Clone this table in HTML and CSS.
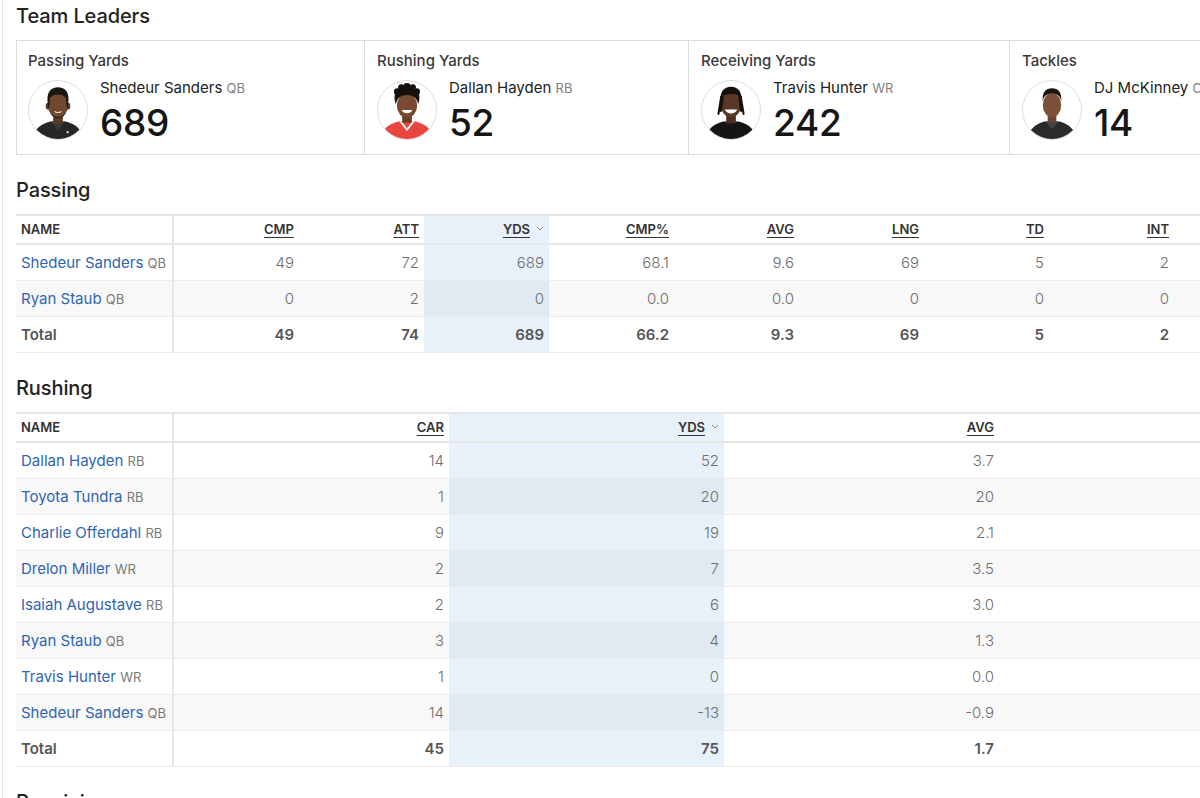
FILE: index.html
```html
<!DOCTYPE html>
<html lang="en">
<head>
<meta charset="utf-8">
<title>Team Stats</title>
<link rel="stylesheet" href="styles.css">
</head>
<body>
<div class="page">
  <h2 class="section-title first">Team Leaders</h2>
  <div class="leaders">
    <div class="leader">
      <div class="leader-label">Passing Yards</div>
      <div class="leader-body">
        <div class="avatar">
          <svg viewBox="0 0 60 60" width="60" height="60">
            <path d="M3 60 C5 50 13 44 22 42 L38 42 C47 44 55 50 57 60 Z" fill="#262626"/>
            <path d="M23 42 L30 51 L37 42 Z" fill="#3a3a3a"/>
            <rect x="25" y="33" width="10" height="11" fill="#5b3a28"/>
            <ellipse cx="19.5" cy="26" rx="2.2" ry="3.5" fill="#5e3c29"/>
            <ellipse cx="40.5" cy="26" rx="2.2" ry="3.5" fill="#5e3c29"/>
            <ellipse cx="30" cy="25" rx="10.5" ry="13" fill="#70472f"/>
            <path d="M19.5 24 C17.5 11 23 6.5 30 6.5 C37 6.5 42.5 11 40.5 24 C39.5 17 36 14 30 14 C24 14 20.5 17 19.5 24 Z" fill="#1a1612"/>
            <path d="M21 19 L20 27 M39 19 L40 27" stroke="#1a1612" stroke-width="1.6" stroke-linecap="round"/>
            <path d="M22 32 C25 38.5 35 38.5 38 32 C37 36 34 38.5 30 38.5 C26 38.5 23 36 22 32 Z" fill="#3a2519"/>
            <path d="M26.5 31.5 C28 33 32 33 33.5 31.5" stroke="#f2e8e0" stroke-width="1.2" fill="none"/>
            <circle cx="40" cy="53" r="1.2" fill="#ddd"/>
          </svg>
        </div>
        <div class="leader-info">
          <div class="leader-name">Shedeur Sanders <span class="pos">QB</span></div>
          <div class="leader-value">689</div>
        </div>
      </div>
    </div>
    <div class="leader">
      <div class="leader-label">Rushing Yards</div>
      <div class="leader-body">
        <div class="avatar">
          <svg viewBox="0 0 60 60" width="60" height="60">
            <path d="M2 60 C4 50 12 44 21 42 L39 42 C48 44 56 50 58 60 Z" fill="#e8463f"/>
            <path d="M22 42 L30 52 L38 42 Z" fill="#f3f3f3"/>
            <path d="M24.5 42 L30 49 L35.5 42 Z" fill="#e8463f"/>
            <rect x="25" y="33" width="10" height="10" fill="#6a3f2a"/>
            <ellipse cx="30" cy="25.5" rx="10.5" ry="12.5" fill="#7a4a30"/>
            <path d="M18.5 24 C15.5 17 17.5 9 23 7 C25.5 3.5 34.5 3.5 37 7 C42.5 9 44.5 17 41.5 24 C40.5 18 36.5 14.5 30 14.5 C23.5 14.5 19.5 18 18.5 24 Z" fill="#17110d"/>
            <circle cx="20" cy="11" r="3.5" fill="#17110d"/>
            <circle cx="40" cy="11" r="3.5" fill="#17110d"/>
            <circle cx="30" cy="6" r="4" fill="#17110d"/>
            <circle cx="24" cy="6.5" r="3.2" fill="#17110d"/>
            <circle cx="36" cy="6.5" r="3.2" fill="#17110d"/>
            <path d="M24.5 30 C26.5 34.5 33.5 34.5 35.5 30 Z" fill="#fff"/>
          </svg>
        </div>
        <div class="leader-info">
          <div class="leader-name">Dallan Hayden <span class="pos">RB</span></div>
          <div class="leader-value">52</div>
        </div>
      </div>
    </div>
    <div class="leader">
      <div class="leader-label">Receiving Yards</div>
      <div class="leader-body">
        <div class="avatar">
          <svg viewBox="0 0 60 60" width="60" height="60">
            <path d="M3 60 C5 50 13 44 22 42 L38 42 C47 44 55 50 57 60 Z" fill="#141414"/>
            <rect x="25" y="33" width="10" height="11" fill="#4a2e1f"/>
            <ellipse cx="30" cy="25" rx="10.5" ry="12.5" fill="#5a3825"/>
            <path d="M19.5 23 C17.5 11 23 6 30 6 C37 6 42.5 11 40.5 23 C39.5 16 36 13.5 30 13.5 C24 13.5 20.5 16 19.5 23 Z" fill="#16110d"/>
            <path d="M20 16 L17 34 M22 13 L19.5 31 M40 16 L43 34 M38 13 L40.5 31" stroke="#16110d" stroke-width="2.2" stroke-linecap="round"/>
            <path d="M23.5 29.5 C26 35 34 35 36.5 29.5 Z" fill="#fff"/>
          </svg>
        </div>
        <div class="leader-info">
          <div class="leader-name">Travis Hunter <span class="pos">WR</span></div>
          <div class="leader-value">242</div>
        </div>
      </div>
    </div>
    <div class="leader">
      <div class="leader-label">Tackles</div>
      <div class="leader-body">
        <div class="avatar">
          <svg viewBox="0 0 60 60" width="60" height="60">
            <path d="M4 60 C6 50 14 44 22 42 L38 42 C46 44 54 50 56 60 Z" fill="#2a2a2a"/>
            <path d="M23 42 L30 50 L37 42 Z" fill="#444"/>
            <rect x="25.5" y="33" width="9" height="10" fill="#6b4532"/>
            <ellipse cx="30" cy="25" rx="9.5" ry="12.5" fill="#7d5139"/>
            <path d="M20.5 21 C19.5 11 24 7.5 30 7.5 C36 7.5 40.5 11 39.5 21 C38.5 15 35 13 30 13 C25 13 21.5 15 20.5 21 Z" fill="#1c1510"/>
          </svg>
        </div>
        <div class="leader-info">
          <div class="leader-name">DJ McKinney <span class="pos">CB</span></div>
          <div class="leader-value">14</div>
        </div>
      </div>
    </div>
  </div>

  <h2 class="section-title">Passing</h2>
  <table class="stats passing">
    <colgroup>
      <col class="col-name">
      <col span="11" class="col-pass">
    </colgroup>
    <thead>
      <tr>
        <th class="name">NAME</th>
        <th><span class="sort">CMP</span></th>
        <th><span class="sort">ATT</span></th>
        <th class="sorted"><span class="sort">YDS</span><svg class="chev" viewBox="0 0 8 5" width="8" height="5"><path d="M1 1 L4 4 L7 1" fill="none" stroke="#888" stroke-width="1"/></svg></th>
        <th><span class="sort">CMP%</span></th>
        <th><span class="sort">AVG</span></th>
        <th><span class="sort">LNG</span></th>
        <th><span class="sort">TD</span></th>
        <th><span class="sort">INT</span></th>
        <th><span class="sort">SACK</span></th>
        <th><span class="sort">QBR</span></th>
        <th><span class="sort">RTG</span></th>
      </tr>
    </thead>
    <tbody>
      <tr>
        <td class="name"><a href="#">Shedeur Sanders</a> <span class="pos">QB</span></td>
        <td>49</td><td>72</td><td class="sorted">689</td><td>68.1</td><td>9.6</td><td>69</td><td>5</td><td>2</td><td>4</td><td>72.4</td><td>160.2</td>
      </tr>
      <tr>
        <td class="name"><a href="#">Ryan Staub</a> <span class="pos">QB</span></td>
        <td>0</td><td>2</td><td class="sorted">0</td><td>0.0</td><td>0.0</td><td>0</td><td>0</td><td>0</td><td>0</td><td>0.0</td><td>0.0</td>
      </tr>
      <tr class="total">
        <td class="name">Total</td>
        <td>49</td><td>74</td><td class="sorted">689</td><td>66.2</td><td>9.3</td><td>69</td><td>5</td><td>2</td><td>4</td><td></td><td></td>
      </tr>
    </tbody>
  </table>

  <h2 class="section-title">Rushing</h2>
  <table class="stats rushing">
    <colgroup>
      <col class="col-name">
      <col span="5" class="col-rush">
    </colgroup>
    <thead>
      <tr>
        <th class="name">NAME</th>
        <th><span class="sort">CAR</span></th>
        <th class="sorted"><span class="sort">YDS</span><svg class="chev" viewBox="0 0 8 5" width="8" height="5"><path d="M1 1 L4 4 L7 1" fill="none" stroke="#888" stroke-width="1"/></svg></th>
        <th><span class="sort">AVG</span></th>
        <th><span class="sort">LNG</span></th>
        <th><span class="sort">TD</span></th>
      </tr>
    </thead>
    <tbody>
      <tr><td class="name"><a href="#">Dallan Hayden</a> <span class="pos">RB</span></td><td>14</td><td class="sorted">52</td><td>3.7</td><td>12</td><td>0</td></tr>
      <tr><td class="name"><a href="#">Toyota Tundra</a> <span class="pos">RB</span></td><td>1</td><td class="sorted">20</td><td>20</td><td>20</td><td>0</td></tr>
      <tr><td class="name"><a href="#">Charlie Offerdahl</a> <span class="pos">RB</span></td><td>9</td><td class="sorted">19</td><td>2.1</td><td>6</td><td>0</td></tr>
      <tr><td class="name"><a href="#">Drelon Miller</a> <span class="pos">WR</span></td><td>2</td><td class="sorted">7</td><td>3.5</td><td>5</td><td>0</td></tr>
      <tr><td class="name"><a href="#">Isaiah Augustave</a> <span class="pos">RB</span></td><td>2</td><td class="sorted">6</td><td>3.0</td><td>4</td><td>0</td></tr>
      <tr><td class="name"><a href="#">Ryan Staub</a> <span class="pos">QB</span></td><td>3</td><td class="sorted">4</td><td>1.3</td><td>3</td><td>0</td></tr>
      <tr><td class="name"><a href="#">Travis Hunter</a> <span class="pos">WR</span></td><td>1</td><td class="sorted">0</td><td>0.0</td><td>0</td><td>0</td></tr>
      <tr><td class="name"><a href="#">Shedeur Sanders</a> <span class="pos">QB</span></td><td>14</td><td class="sorted">-13</td><td>-0.9</td><td>9</td><td>0</td></tr>
      <tr class="total"><td class="name">Total</td><td>45</td><td class="sorted">75</td><td>1.7</td><td>20</td><td>0</td></tr>
    </tbody>
  </table>

  <h2 class="section-title">Receiving</h2>
</div>
</body>
</html>
```

FILE: styles.css
```css
html, body {
  margin: 0;
  padding: 0;
  background: #ffffff;
  overflow: hidden;
}

body {
  font-family: "Inter", "Liberation Sans", sans-serif;
  color: #222222;
}

.page {
  margin-left: 2px;
  border-left: 1px solid #e6e6e6;
  padding: 4px 0 0 13px;
  min-height: 900px;
  width: 1700px;
}

.section-title {
  margin: 23px 0 12px;
  font-size: 20px;
  line-height: 24px;
  font-weight: 500;
  color: #222222;
  letter-spacing: -0.1px;
}

.section-title.first {
  margin-top: 0;
}

/* Leaders */
.leaders {
  display: grid;
  grid-template-columns: 347px 324px 321px 360px;
  width: max-content;
  border: 1px solid #dcdcdc;
}

.leader {
  padding: 11px 12px 13px;
  border-left: 1px solid #dcdcdc;
}

.leader:first-child {
  border-left: none;
  padding-left: 11px;
}

.leader-label {
  font-size: 15px;
  line-height: 18px;
  font-weight: 500;
  color: #3a3a3a;
}

.leader-body {
  display: flex;
  gap: 12px;
  margin-top: 10px;
  align-items: flex-start;
}

.avatar {
  width: 58px;
  height: 58px;
  border-radius: 50%;
  border: 1px solid #dedede;
  overflow: hidden;
  background: #ffffff;
  flex: none;
}

.avatar svg {
  display: block;
  width: 58px;
  height: 58px;
}

.leader-info {
  display: flex;
  flex-direction: column;
}

.leader-name {
  font-size: 15px;
  line-height: 16px;
  color: #222222;
  white-space: nowrap;
}

.leader-name .pos {
  font-size: 13px;
  line-height: 1;
  color: #808080;
}

.leader-value {
  margin-top: 8px;
  font-size: 37px;
  line-height: 37px;
  font-weight: 500;
  color: #151515;
  letter-spacing: -0.3px;
}

/* Tables */
.stats {
  border-collapse: separate;
  border-spacing: 0;
  table-layout: fixed;
  width: 1533px;
}

.col-name {
  width: 158px;
}

.col-pass {
  width: 125px;
}

.col-rush {
  width: 275px;
}

.stats th,
.stats td {
  padding: 0 5px;
  text-align: right;
  white-space: nowrap;
  overflow: hidden;
}

.stats th {
  height: 27px;
  line-height: 27px;
  border-top: 2px solid #e6e6e6;
  border-bottom: 2px solid #e6e6e6;
  font-size: 13px;
  font-weight: 600;
  color: #333333;
  background: #ffffff;
}

.stats th .sort {
  text-decoration: underline;
  text-underline-offset: 3px;
  text-decoration-thickness: 1px;
}

.stats th .chev {
  margin-left: 6px;
  vertical-align: 3px;
}

.stats .name {
  text-align: left;
  border-right: 2px solid #e6e6e6;
}

.stats td {
  height: 35px;
  line-height: 35px;
  font-size: 15px;
  font-weight: 300;
  color: #6e6e6e;
  border-bottom: 1px solid #ececec;
}

.stats tbody tr:nth-child(even) td {
  background: #f8f8f8;
}

.stats .sorted {
  background: #e8f0f9;
}

.stats tbody tr:nth-child(even) td.sorted {
  background: #e1e9f2;
}

.stats td.name a {
  color: #2f65b3;
  text-decoration: none;
  font-weight: 400;
}

.stats td.name .pos {
  font-size: 13px;
  line-height: 1;
  font-weight: 400;
  color: #7a7a7a;
}

.stats tr.total td {
  font-weight: 600;
  color: #555555;
}
```
